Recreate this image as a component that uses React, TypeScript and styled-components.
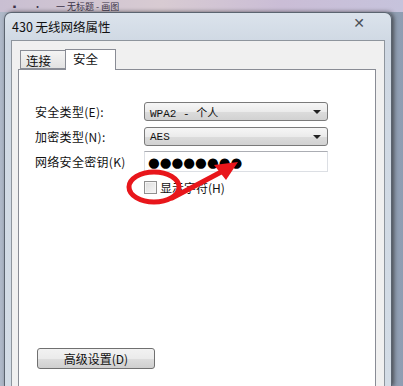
import React from 'react';
import styled, { createGlobalStyle } from 'styled-components';

const GlobalStyle = createGlobalStyle`
  html, body {
    margin: 0;
    padding: 0;
    width: 403px;
    height: 386px;
    overflow: hidden;
    background: #b9c3d2;
  }
  * { box-sizing: border-box; }
`;

const Desktop = styled.div`
  position: relative;
  width: 403px;
  height: 386px;
  overflow: hidden;
  display: flex;
  flex-direction: column;
  background: linear-gradient(90deg, #aeb8c8 0%, #c5cfdc 60%, #8f9db2 100%);
  font-family: 'Noto Sans CJK SC', 'DejaVu Sans', sans-serif;
`;

const Taskbar = styled.div`
  height: 12px;
  flex: none;
  display: flex;
  align-items: center;
  gap: 14px;
  padding-left: 10px;
  background: linear-gradient(90deg, #c9bfd2 0%, #d8cbd2 40%, #cabdd6 70%, #c6c3dc 100%);
  color: #3b3348;
  font-size: 9px;
  line-height: 11px;
  overflow: hidden;
`;

const Stage = styled.div`
  flex: 1;
  display: flex;
  padding-left: 4px;
`;

const Window = styled.div`
  width: 388px;
  display: flex;
  flex-direction: column;
  border: 1px solid #5b6470;
  border-bottom: none;
  border-radius: 7px 7px 0 0;
  background: linear-gradient(180deg, #dbe3ec 0%, #cfd8e3 30px, #d3dce6 100%);
  padding: 0 6px;
  box-shadow: 2px 0 4px rgba(40, 40, 40, 0.7);
`;

const TitleBar = styled.div`
  height: 27px;
  display: flex;
  align-items: center;
  justify-content: space-between;
  padding: 0 20px 0 1px;
  font-size: 12.5px;
  color: #111;
`;

const Close = styled.span`
  font-family: 'DejaVu Sans', sans-serif;
  font-size: 14px;
  color: #4a4f57;
  margin-top: -8px;
`;

const Client = styled.div`
  flex: 1;
  display: flex;
  flex-direction: column;
  background: #f0f0f0;
  border: 1px solid #8e959d;
  border-bottom: none;
  padding: 7px 8px 0 6px;
`;

const Tabs = styled.div`
  display: flex;
  align-items: flex-end;
  height: 21px;
  padding-left: 2px;
`;

const Tab = styled.div<{ $active?: boolean }>`
  height: ${p => (p.$active ? '21px' : '19px')};
  width: ${p => (p.$active ? '51px' : '46px')};
  padding: ${p => (p.$active ? '1px 0 0 7px' : '2px 0 0 5px')};
  margin-bottom: ${p => (p.$active ? '-1px' : '0')};
  margin-left: ${p => (p.$active ? '-1px' : '0')};
  border: 1px solid #898c95;
  border-bottom: ${p => (p.$active ? 'none' : '1px solid #898c95')};
  background: ${p => (p.$active ? '#ffffff' : 'linear-gradient(180deg, #f4f4f4, #e2e2e2)')};
  font-size: 12.5px;
  line-height: 16px;
  color: #111;
  position: relative;
  z-index: ${p => (p.$active ? 1 : 0)};
`;

const Panel = styled.div`
  flex: 1;
  background: #ffffff;
  border: 1px solid #898c95;
  border-bottom: none;
  padding: 29px 0 0 16px;
  display: flex;
  flex-direction: column;
`;

const FormRow = styled.div`
  display: flex;
  align-items: center;
  height: 25px;
`;

const Label = styled.div`
  width: 109px;
  font-size: 12px;
  color: #111;
  letter-spacing: 0.3px;
`;

const Select = styled.div`
  width: 184px;
  height: 19px;
  display: flex;
  align-items: center;
  justify-content: space-between;
  padding: 0 6px 0 5px;
  border: 1px solid #7a7a7a;
  border-radius: 3px;
  background: linear-gradient(180deg, #f6f6f6 0%, #ebebeb 50%, #dcdcdc 51%, #d2d2d2 100%);
  font-family: 'Liberation Mono', 'Noto Sans CJK SC', monospace;
  font-size: 11px;
  color: #111;
`;

const Arrow = styled.span`
  width: 0;
  height: 0;
  border-left: 4px solid transparent;
  border-right: 4px solid transparent;
  border-top: 4px solid #222;
`;

const KeyInput = styled.div`
  width: 184px;
  height: 21px;
  display: flex;
  align-items: center;
  padding-left: 3px;
  border: 1px solid #dcdfe4;
  border-top-color: #abadb3;
  background: #fff;
  font-family: 'DejaVu Sans', sans-serif;
  font-size: 13.5px;
  color: #000;
`;

const CheckRow = styled.div`
  display: flex;
  align-items: center;
  gap: 3px;
  margin: 5px 0 0 109px;
  font-size: 12px;
  color: #111;
`;

const CheckBox = styled.span`
  width: 13px;
  height: 13px;
  border: 1px solid #8f8f8f;
  background: linear-gradient(135deg, #dcdcdc, #f7f7f7);
  box-shadow: inset 0 0 0 1px #f4f4f4;
`;

const Spacer = styled.div`
  height: 152px;
`;

const Button = styled.div`
  width: 118px;
  height: 21px;
  margin-left: 2px;
  display: flex;
  align-items: center;
  justify-content: center;
  border: 1px solid #707070;
  border-radius: 3px;
  background: linear-gradient(180deg, #f2f2f2 0%, #ebebeb 50%, #dddddd 51%, #cfcfcf 100%);
  font-size: 12px;
  color: #111;
`;

const Annotation = styled.svg`
  position: absolute;
  left: 0;
  top: 0;
  pointer-events: none;
`;

const DesktopEdge = styled.div`
  flex: 1;
`;

export default function App() {
  return (
    <>
      <GlobalStyle />
      <Desktop>
        <Taskbar>
          <span>▪</span>
          <span>·</span>
          <span>一 无标题 - 画图</span>
        </Taskbar>
        <Stage>
          <Window>
            <TitleBar>
              <span>430 无线网络属性</span>
              <Close>✕</Close>
            </TitleBar>
            <Client>
              <Tabs>
                <Tab>连接</Tab>
                <Tab $active>安全</Tab>
              </Tabs>
              <Panel>
                <FormRow>
                  <Label>安全类型(E):</Label>
                  <Select>
                    <span>WPA2 - 个人</span>
                    <Arrow />
                  </Select>
                </FormRow>
                <FormRow>
                  <Label>加密类型(N):</Label>
                  <Select>
                    <span>AES</span>
                    <Arrow />
                  </Select>
                </FormRow>
                <FormRow>
                  <Label>网络安全密钥(K)</Label>
                  <KeyInput>●●●●●●●●</KeyInput>
                </FormRow>
                <CheckRow>
                  <CheckBox />
                  <span>显示字符(H)</span>
                </CheckRow>
                <Spacer />
                <Button>高级设置(D)</Button>
              </Panel>
            </Client>
          </Window>
          <DesktopEdge />
        </Stage>
        <Annotation width="403" height="386" viewBox="0 0 403 386">
          <ellipse cx="154" cy="187" rx="25" ry="15" fill="none" stroke="#e8161b" strokeWidth="5" />
          <line x1="172" y1="198" x2="223" y2="171" stroke="#e8161b" strokeWidth="5" strokeLinecap="round" />
          <polygon points="238,162 214,165 226,180" fill="#e8161b" />
        </Annotation>
      </Desktop>
    </>
  );
}
